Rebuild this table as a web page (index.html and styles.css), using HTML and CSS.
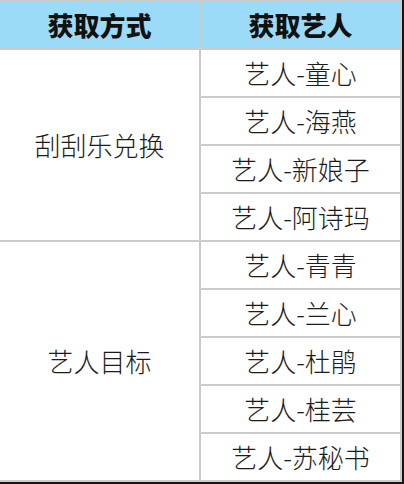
FILE: index.html
```html
<!DOCTYPE html>
<html lang="zh">
<head>
<meta charset="utf-8">
<link rel="stylesheet" href="styles.css">
</head>
<body>
<div class="table">
  <div class="head">获取方式</div>
  <div class="head">获取艺人</div>
  <div class="group g1">刮刮乐兑换</div>
  <div class="cell">艺人-童心</div>
  <div class="cell">艺人-海燕</div>
  <div class="cell">艺人-新娘子</div>
  <div class="cell">艺人-阿诗玛</div>
  <div class="group g2">艺人目标</div>
  <div class="cell">艺人-青青</div>
  <div class="cell">艺人-兰心</div>
  <div class="cell">艺人-杜鹃</div>
  <div class="cell">艺人-桂芸</div>
  <div class="cell">艺人-苏秘书</div>
</div>
</body>
</html>
```
FILE: styles.css
```css
html, body {
  margin: 0;
  padding: 0;
  background: #141414;
}
body {
  width: 404px;
  height: 484px;
  overflow: hidden;
}
.table {
  width: 400px;
  display: grid;
  grid-template-columns: 199px 199px;
  grid-template-rows: 47px repeat(9, 46px);
  gap: 2px;
  background: #cbcbcb;
  border-top: 1px solid #cbcbcb;
  border-right: 2px solid #cbcbcb;
  border-bottom: 2px solid #cbcbcb;
  font-family: "Noto Sans CJK SC", sans-serif;
  color: #1c1c1c;
}
.table > div {
  display: flex;
  align-items: center;
  justify-content: center;
  background: #fff;
  font-size: 26px;
  font-weight: 300;
  line-height: 1;
}
.table > .head {
  background: #9cdbf8;
  font-size: 26px;
  font-weight: 900;
  color: #111;
}
.g1 {
  grid-column: 1;
  grid-row: 2 / span 4;
}
.g2 {
  grid-column: 1;
  grid-row: 6 / span 5;
}
.cell {
  grid-column: 2;
}
```
